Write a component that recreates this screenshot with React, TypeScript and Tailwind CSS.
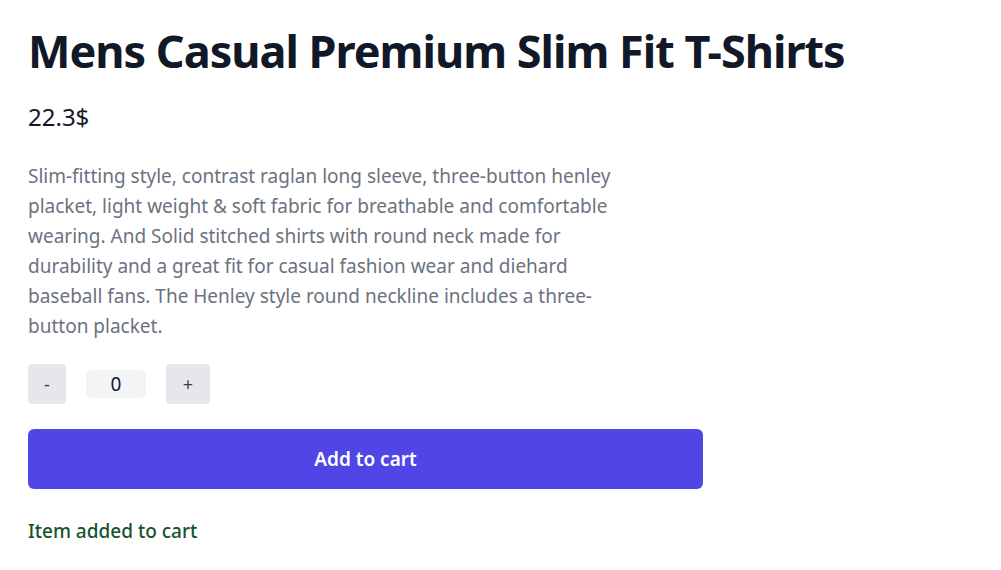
export default function App() {
  return (
    <div className="min-h-screen bg-white px-7 pt-7 font-['Noto_Sans',sans-serif]">
      <h1 className="text-[45px] leading-[45px] font-bold tracking-[-1px] text-[#111827]">Mens Casual Premium Slim Fit T-Shirts</h1>
      <p className="mt-7 text-2xl leading-8 text-[#111827]">22.3$</p>
      <p className="mt-7 max-w-[600px] text-[19px] leading-[30px] text-[#6b7280]">
        Slim-fitting style, contrast raglan long sleeve, three-button henley placket, light weight &amp; soft fabric for breathable and comfortable wearing. And Solid stitched shirts with round neck made for durability and a great fit for casual fashion wear and diehard baseball fans. The Henley style round neckline includes a three-button placket.
      </p>
      <div className="mt-[23px] flex items-center gap-5">
        <button className="h-10 w-[38px] rounded bg-[#e5e7eb] text-lg text-[#374151]">-</button>
        <div className="flex h-7 w-[60px] items-center justify-center rounded-md bg-[#f3f4f6] text-[19px] text-[#111827]">0</div>
        <button className="h-10 w-[44px] rounded bg-[#e5e7eb] text-lg text-[#374151]">+</button>
      </div>
      <button className="mt-[25px] h-[60px] w-[675px] rounded-md bg-[#4f46e5] text-[19px] font-semibold text-white">Add to cart</button>
      <p className="mt-[28px] text-[19px] leading-7 font-medium text-[#14532d]">Item added to cart</p>
    </div>
  );
}
